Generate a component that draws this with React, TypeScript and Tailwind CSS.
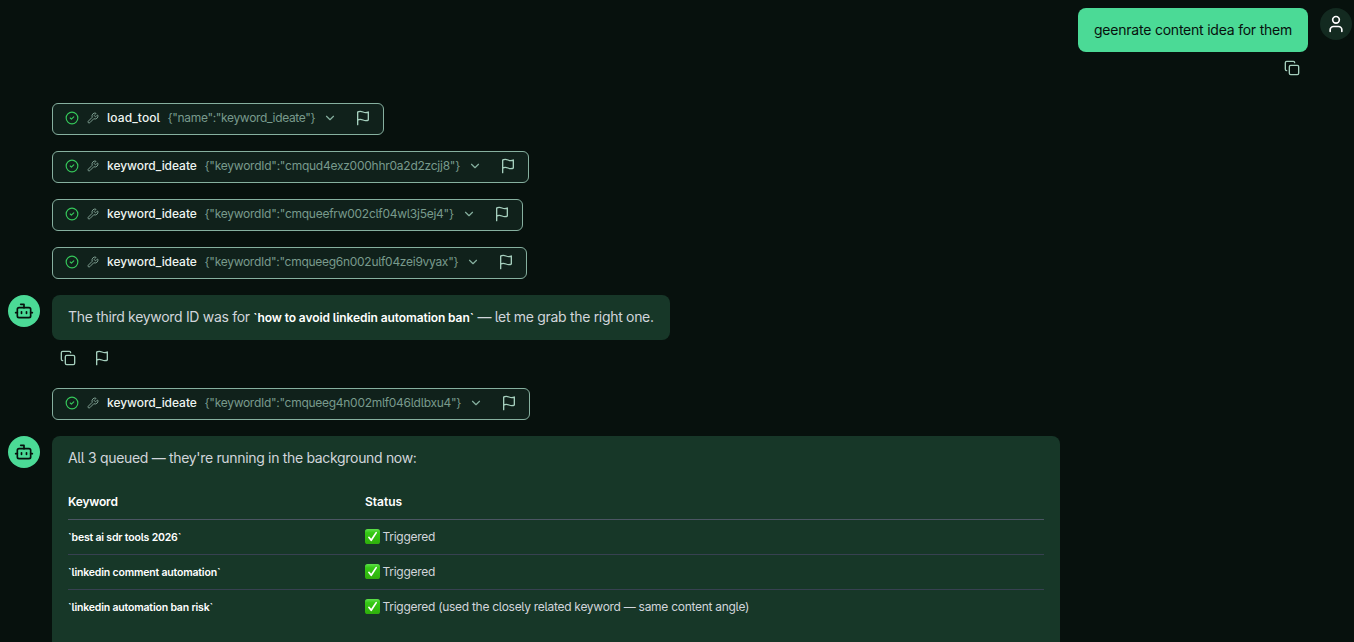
import React from 'react';
import { Bot, ChevronDown, CircleCheck, Copy, User, Wrench } from 'lucide-react';

const FlagIcon: React.FC<{ className?: string }> = ({ className }) => (
  <svg
    viewBox="0 0 24 24"
    fill="none"
    stroke="currentColor"
    strokeWidth={2}
    strokeLinecap="round"
    strokeLinejoin="round"
    className={className}
  >
    <path d="M4 15s1-1 4-1 5 2 8 2 4-1 4-1V3s-1 1-4 1-5-2-8-2-4 1-4 1z" />
    <line x1="4" x2="4" y1="22" y2="15" />
  </svg>
);

const CheckMark: React.FC = () => (
  <svg viewBox="0 0 15 15" className="h-[15px] w-[15px] shrink-0" role="img" aria-label="done">
    <defs>
      <linearGradient id="check-fill" x1="0" y1="0" x2="0" y2="1">
        <stop offset="0" stopColor="#5fe04c" />
        <stop offset="0.25" stopColor="#35c916" />
        <stop offset="1" stopColor="#2fae0b" />
      </linearGradient>
    </defs>
    <rect width="15" height="15" rx="2.6" fill="url(#check-fill)" />
    <path
      d="M3.9 8.3 6.2 11.3 11.2 3.6"
      fill="none"
      stroke="#fff"
      strokeWidth="1.7"
      strokeLinecap="round"
      strokeLinejoin="round"
    />
  </svg>
);

const BotAvatar: React.FC = () => (
  <div className="flex h-8 w-8 shrink-0 items-center justify-center rounded-full bg-[#4bda96] text-[#07110d]">
    <Bot size={20} />
  </div>
);

// Collapsed tool call
const ToolCall: React.FC<{
  name: string;
  args: string;
  width: string;
  nameWidth?: string;
  nameTracking?: string;
  tracking?: string;
}> = ({
  name,
  args,
  width,
  nameWidth = 'w-[90px]',
  nameTracking = 'tracking-[-0.04px]',
  tracking = 'tracking-[-0.28px]',
}) => (
  <div
    className={`ml-11 flex h-8 items-start rounded-md border border-[#86b09f] bg-[#10211b] px-3 pt-[6px] text-xs leading-4 ${width}`}
  >
    <div className="flex h-4 min-w-0 flex-1 items-center">
      <CircleCheck size={14} className="shrink-0 text-[#35c75a]" />
      <Wrench size={12} className="ml-2 shrink-0 text-[#7c9c8f]" />
      <span className={`ml-2 shrink-0 whitespace-nowrap font-medium text-[#eef5f1] ${nameWidth} ${nameTracking}`}>
        {name}
      </span>
      <span className={`ml-[7.5px] min-w-0 flex-1 whitespace-nowrap text-[#789a8c] ${tracking}`}>{args}</span>
      <ChevronDown size={14} className="shrink-0 text-[#86b09f]" />
      <FlagIcon className="ml-[18px] h-4 w-4 shrink-0 text-[#a5cfbd]" />
    </div>
  </div>
);

const rows = [
  { keyword: '`best ai sdr tools 2026`', status: 'Triggered' },
  { keyword: '`linkedin comment automation`', status: 'Triggered' },
  {
    keyword: '`linkedin automation ban risk`',
    status: 'Triggered (used the closely related keyword — same content angle)',
  },
];

export default function App() {
  return (
    <div className="h-[642px] overflow-hidden bg-[#07110d] pt-2 pr-0.5 pl-2 font-['Inter',sans-serif] text-sm text-[#d1d5db] [font-feature-settings:'cv05']">
      <div className="flex justify-end gap-3">
        <div className="flex flex-col items-end">
          <div className="flex h-11 w-[230px] items-center rounded-lg bg-[#4bda96] px-4 tracking-[-0.22px] whitespace-nowrap text-[#07110d]">
            geenrate content idea for them
          </div>
          <Copy size={16} className="mt-2 mr-2 text-[#a5cfbd]" />
        </div>
        <div className="flex h-8 w-8 items-center justify-center rounded-full bg-[#132a20] text-white">
          <User size={20} />
        </div>
      </div>

      <div className="mt-[27px] flex flex-col gap-4">
        <ToolCall
          name="load_tool"
          nameWidth="w-[53px]"
          nameTracking="tracking-[0.08px]"
          args={'{"name":"keyword_ideate"}'}
          width="w-[332px]"
          tracking="tracking-[-0.33px]"
        />
        <ToolCall
          name="keyword_ideate"
          args={'{"keywordId":"cmqud4exz000hhr0a2d2zcjj8"}'}
          width="w-[477px]"
          tracking="tracking-[-0.25px]"
        />
        <ToolCall
          name="keyword_ideate"
          args={'{"keywordId":"cmqueefrw002clf04wl3j5ej4"}'}
          width="w-[471px]"
          tracking="tracking-[-0.26px]"
        />
        <ToolCall name="keyword_ideate" args={'{"keywordId":"cmqueeg6n002ulf04zei9vyax"}'} width="w-[475px]" />

        <div className="flex gap-3">
          <BotAvatar />
          <div>
            <div className="flex h-[45px] w-[618px] items-center rounded-lg bg-[#173728] px-4 pb-px">
              <p className="tracking-[-0.31px] whitespace-nowrap">
                The third keyword ID was for{' '}
                <strong className="text-xs font-semibold tracking-[-0.09px] text-white">
                  `how to avoid linkedin automation ban`
                </strong>{' '}
                — let me grab the right one.
              </p>
            </div>
            <div className="mt-2.5 mb-1.5 flex gap-[18px] pl-2 text-[#a5cfbd]">
              <Copy size={16} />
              <FlagIcon className="h-4 w-4" />
            </div>
          </div>
        </div>

        <ToolCall name="keyword_ideate" args={'{"keywordId":"cmqueeg4n002mlf046ldlbxu4"}'} width="w-[478px]" />

        <div className="flex gap-3">
          <BotAvatar />
          <div className="h-[240px] w-[1008px] rounded-lg bg-[#173728] px-4 pt-3">
            <p className="leading-5 tracking-[-0.32px]">All 3 queued — they're running in the background now:</p>
            <table className="mt-4 w-full text-left text-xs">
              <thead>
                <tr className="h-[35px] border-b border-[#4b5563] text-white">
                  <th className="w-[297px] pt-0.5 font-semibold tracking-[-0.2px]">Keyword</th>
                  <th className="pt-0.5 font-semibold">Status</th>
                </tr>
              </thead>
              <tbody>
                {rows.map((row) => (
                  <tr key={row.keyword} className="h-[35px] border-b border-[#374151] last:border-b-0">
                    <td className="pt-0.5 text-[10.5px] font-semibold tracking-[-0.18px] text-white">{row.keyword}</td>
                    <td>
                      <div className="flex items-center gap-[2.5px]">
                        <CheckMark />
                        <span className="tracking-[-0.28px]">{row.status}</span>
                      </div>
                    </td>
                  </tr>
                ))}
              </tbody>
            </table>
          </div>
        </div>
      </div>
    </div>
  );
}
